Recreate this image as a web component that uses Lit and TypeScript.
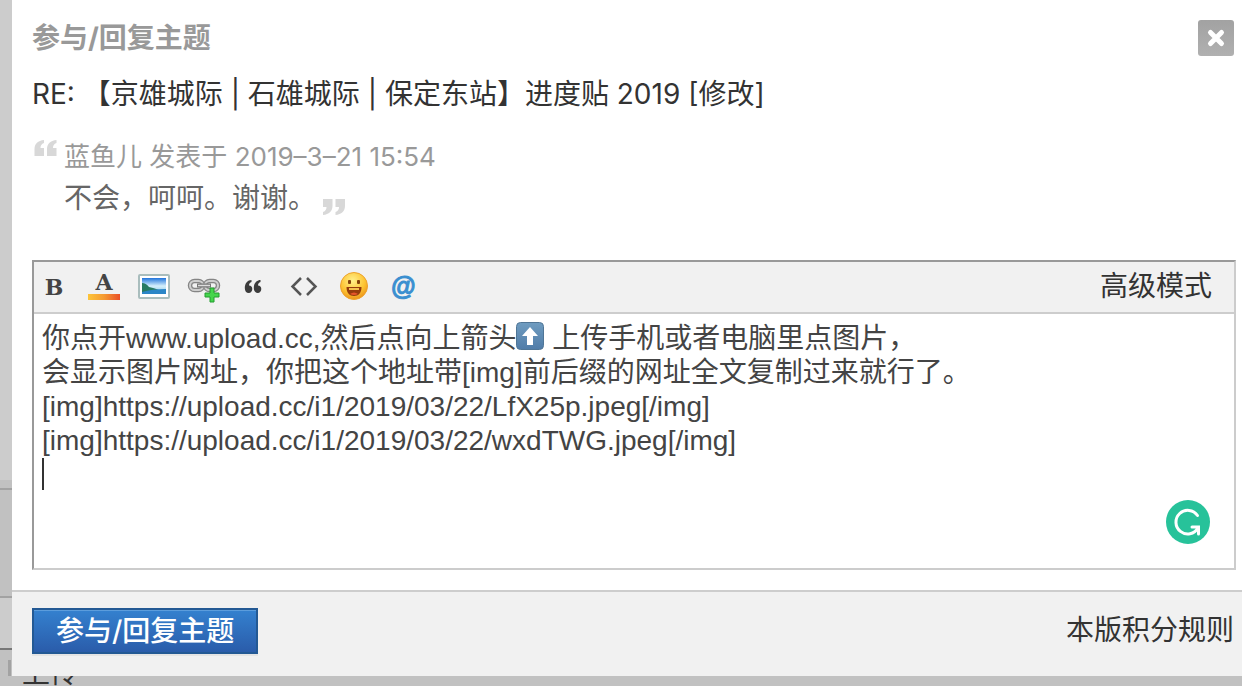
import { LitElement, html, css, svg } from "lit";
import { customElement, state } from "lit/decorators.js";

const message = [
  "你点开www.upload.cc,然后点向上箭头\u2003 上传手机或者电脑里点图片，",
  "会显示图片网址，你把这个地址带[img]前后缀的网址全文复制过来就行了。",
  "[img]https://upload.cc/i1/2019/03/22/LfX25p.jpeg[/img]",
  "[img]https://upload.cc/i1/2019/03/22/wxdTWG.jpeg[/img]",
  "",
].join("\n");

const icons = {
  bold: svg`<text x="20" y="24" text-anchor="middle" class="serif" font-size="22">B</text>`,
  color: svg`<defs><linearGradient id="bar"><stop offset="0" stop-color="#fdc53a"/><stop offset=".5" stop-color="#f59a33"/><stop offset="1" stop-color="#ea4f27"/></linearGradient></defs>
    <text x="20" y="19" text-anchor="middle" class="serif" font-size="22">A</text><rect x="4" y="23" width="32" height="6" fill="url(#bar)"/>`,
  image: svg`<defs><linearGradient id="sky" x2="0" y2="1"><stop offset="0" stop-color="#1f74dc"/><stop offset=".5" stop-color="#d5f0fb"/><stop offset="1" stop-color="#7fc0e6"/></linearGradient></defs>
    <rect x="5" y="4" width="30" height="23" rx="1" fill="#fff" stroke="#a9bdbd" stroke-width="2"/><rect x="8" y="7" width="24" height="16" fill="url(#sky)"/>
    <path d="M8 12q4 0 7 4q5 1 10 3l-6 1l-11 2z" fill="#287b61"/><path d="M8 21q10-3 24-3v5H8z" fill="#2b86c7"/>`,
  link: svg`<g fill="none" stroke="#858585" stroke-width="4.500"><rect x="6" y="10" width="13" height="9" rx="4.500"/><rect x="21" y="10" width="13" height="9" rx="4.500"/></g>
    <g fill="none" stroke="#cfcfcf" stroke-width="2"><rect x="6" y="10" width="13" height="9" rx="4.500"/><rect x="21" y="10" width="13" height="9" rx="4.500"/></g>
    <path d="M13 14.500h14" stroke="#777" stroke-width="4"/><path d="M14 14.500h12" stroke="#ddd" stroke-width="1.500"/>
    <path d="M26 17h4v5h5v4h-5v5h-4v-5h-5v-4h5z" fill="#45d54c" stroke="#259c31"/>`,
  quote: svg`<path d="M17.500 9v2c-1.500.5-2.500 1.500-2.500 3.500c2 0 3.300 1.200 3.300 3.500s-1.500 4-3.500 4c-2.500 0-4-2-4-5c0-5 3-8 6.700-8zM26.500 9v2c-1.500.5-2.500 1.500-2.500 3.500c2 0 3.300 1.200 3.300 3.500s-1.500 4-3.500 4c-2.500 0-4-2-4-5c0-5 3-8 6.700-8z" fill="#3c3c3c"/>`,
  code: svg`<path d="M17 7L8.500 15.500l8.500 8.500M23 7l8.500 8.500L23 24" fill="none" stroke="#555" stroke-width="2.500"/>`,
  smile: svg`<defs><radialGradient id="face" cx=".45" cy=".3" r=".75"><stop offset="0" stop-color="#fff08a"/><stop offset=".6" stop-color="#fdc433"/><stop offset="1" stop-color="#e98b17"/></radialGradient></defs>
    <circle cx="20" cy="15" r="13.500" fill="url(#face)" stroke="#eda22c"/><rect x="14" y="9" width="3" height="4" rx="1" fill="#85420b"/><rect x="23" y="9" width="3" height="4" rx="1" fill="#85420b"/>
    <path d="M12.500 16h15c0 6-3 9-7.500 9s-7.500-3-7.500-9z" fill="#963b0c"/><path d="M15 17h10v2H15z" fill="#f5c14f"/><path d="M16 23q4-3 8 0q-4 2-8 0z" fill="#e8552b"/>`,
  at: svg`<text x="19" y="24" text-anchor="middle" font-size="25" class="at">@</text>`,
};

const tools = [
  { name: "粗体", icon: icons.bold },
  { name: "文字颜色", icon: icons.color },
  { name: "图片", icon: icons.image },
  { name: "添加链接", icon: icons.link },
  { name: "引用", icon: icons.quote },
  { name: "代码", icon: icons.code },
  { name: "表情", icon: icons.smile },
  { name: "@朋友", icon: icons.at },
];

@customElement("editor-toolbar")
export class EditorToolbar extends LitElement {
  static styles = css`
    :host {
      display: flex;
      align-items: center;
      height: 52px;
      box-sizing: border-box;
      padding-right: 22px;
      background: #f1f1f1;
      border-bottom: 2px solid #cdcdcd;
    }
    .tools { display: flex; gap: 10px; flex: 1; }
    button { width: 40px; height: 32px; padding: 0; border: 0; background: none; }
    svg { display: block; width: 40px; height: 32px; }
    a { color: #333; text-decoration: none; font-size: 28px; line-height: 40px; }
    .serif { font-family: "DejaVu Serif", serif; font-weight: 700; fill: #444; }
    .at { font-family: "Liberation Sans", sans-serif; font-weight: 700; font-style: italic; fill: #3a8fd0; stroke: #3a8fd0; stroke-width: 1px; }
  `;
  render() {
    return html`
      <div class="tools" role="toolbar">
        ${tools.map((t) => html`<button type="button" aria-label=${t.name}><svg viewBox="0 0 40 32" aria-hidden="true">${t.icon}</svg></button>`)}
      </div>
      <a href="#advanced">高级模式</a>
    `;
  }
}

@customElement("app-root")
export class AppRoot extends LitElement {
  @state() private text = message;

  static styles = css`
    :host {
      display: block;
      font-family: "Liberation Sans", "Noto Sans CJK SC", sans-serif;
      color: #333;
    }
    * { box-sizing: border-box; }
    .page {
      display: grid;
      grid-template-columns: 12px 1fr;
      grid-template-rows: auto 1fr;
      height: 100vh;
      overflow: hidden;
      background: #c1c1c1;
    }
    .behind { display: flex; flex-direction: column; }
    .behind .top { height: 480px; background: #ccc; }
    .behind .head { height: 10px; border-bottom: 2px solid #a2a2a2; }
    .behind .gap { height: 108px; border-bottom: 2px solid #a2a2a2; }
    .behind .row { height: 52px; background: #ccc; border-bottom: 2px solid #777; }
    .behind .edge { flex: 1; margin: 10px 0 0 8px; border-left: 3px solid #a2a2a2; }
    .below { grid-column: 1 / 3; display: flex; align-items: flex-end; height: 10px; overflow: hidden; }
    .below .user { flex: none; margin-bottom: -8px; padding-left: 22px; font-size: 28px; line-height: 40px; }
    .dialog { background: #fff; }
    .content { padding: 18px 6px 20px 20px; }
    header { display: flex; justify-content: space-between; align-items: center; height: 40px; padding-right: 2px; }
    h1 { margin: 0; font-family: "Inter", "Noto Sans CJK SC", sans-serif; font-size: 28px; line-height: 40px; color: #999; font-weight: 700; }
    .close { width: 36px; height: 36px; padding: 0; border: 0; border-radius: 3px; background: linear-gradient(#a2a2a2, #b0b0b0); }
    .close svg { display: block; }
    .subject { margin: 16px 0 0; font-family: "Inter", "Noto Sans CJK SC", sans-serif; font-size: 28px; line-height: 40px; }
    .subject a { color: #333; text-decoration: none; }
    blockquote { display: grid; grid-template-columns: 32px 1fr; margin: 22px 0 0; }
    .mark { display: block; width: 28px; height: 24px; fill: #d8d8d8; }
    .by { margin: 0; font-family: "Inter", "Noto Sans CJK SC", sans-serif; font-size: 26px; line-height: 42px; color: #999; }
    .said { display: flex; gap: 4px; align-items: flex-end; margin: 0; font-size: 28px; line-height: 42px; color: #666; }
    .editor {
      position: relative;
      margin-top: 40px;
      border: 2px solid;
      border-color: #999 #ccc #ccc #999;
    }
    textarea {
      display: block;
      width: 100%;
      height: 254px;
      padding: 8px;
      border: 0;
      outline: 0;
      resize: none;
      background: #fff;
      color: #444;
      font: inherit;
      font-size: 28px;
      line-height: 34px;
    }
    .arrow { position: absolute; left: 482px; top: 60px; pointer-events: none; }
    .caret { position: absolute; left: 8px; top: 196px; width: 2px; height: 32px; background: #333; }
    .grammar { position: absolute; right: 24px; bottom: 24px; width: 44px; height: 44px; padding: 0; border: 0; background: none; }
    .grammar svg { display: block; }
    footer {
      display: flex;
      justify-content: space-between;
      align-items: center;
      height: 86px;
      padding: 0 8px 6px 20px;
      background: #f1f1f1;
      border-top: 2px solid #cdcdcd;
    }
    .submit {
      height: 46px;
      padding: 0 22px;
      border: 2px solid #235994;
      background: linear-gradient(#3481cf, #2a5caa);
      box-shadow: 0 2px 0 #e4e4e4, inset 0 1px 0 #5c9ddc;
      color: #fff;
      font-family: "Inter", "Noto Sans CJK SC", sans-serif;
      font-size: 28px;
      font-weight: 500;
      line-height: 40px;
    }
    footer a { color: #333; text-decoration: none; font-size: 28px; line-height: 40px; }
  `;

  render() {
    return html`
      <div class="page">
        <div class="behind">
          <div class="top"></div><div class="head"></div><div class="gap"></div><div class="row"></div><div class="edge"></div>
        </div>
        <form class="dialog" role="dialog" aria-labelledby="title" @submit=${(e: Event) => e.preventDefault()}>
          <div class="content">
            <header>
              <h1 id="title">参与/回复主题</h1>
              <button class="close" type="button" aria-label="关闭">
                <svg viewBox="0 0 36 36" width="36" height="36"><path d="M12.500 12.500l11 11M23.500 12.500l-11 11" stroke="#fff" stroke-width="5" stroke-linecap="round"/></svg>
              </button>
            </header>
            <p class="subject">RE: 【京雄城际 | 石雄城际 | 保定东站】进度贴 2019 [<a href="#edit">修改</a>]</p>
            <blockquote>
              <svg class="mark" viewBox="0 0 28 24"><path d="M12 4v3c-2.500 1-3.500 2.500-3.500 5H12v8H2.500v-7C2.500 8 6 4.500 12 4zM24.500 4v3c-2.500 1-3.500 2.500-3.500 5h3.500v8H15v-7c0-5 3.500-8.500 9.500-9z"/></svg>
              <div>
                <p class="by">蓝鱼儿 发表于 2019–3–21 15:54</p>
                <p class="said">不会，呵呵。谢谢。<svg class="mark" viewBox="0 0 28 24"><path d="M3 19v-3c2.500-1 3.500-2.500 3.500-5H3V3h9.500v7c0 5-3.500 8.500-9.500 9zM15.500 19v-3c2.500-1 3.500-2.500 3.500-5h-3.500V3H25v7c0 5-3.500 8.500-9.500 9z"/></svg></p>
              </div>
            </blockquote>
            <div class="editor">
              <editor-toolbar></editor-toolbar>
              <textarea aria-label="回复内容" spellcheck="false" .value=${this.text}
                @input=${(e: Event) => (this.text = (e.target as HTMLTextAreaElement).value)}></textarea>
              <svg class="arrow" viewBox="0 0 28 28" width="28" height="28">
                <defs><linearGradient id="key" x2="0" y2="1"><stop offset="0" stop-color="#6f9cc0"/><stop offset="1" stop-color="#507ca8"/></linearGradient></defs>
                <rect x=".5" y=".5" width="27" height="27" rx="4" fill="url(#key)" stroke="#507696"/><path d="M14 5l8 9h-5v9h-6v-9H6z" fill="#fff"/>
              </svg>
              <span class="caret"></span>
              <button class="grammar" type="button" aria-label="语法检查">
                <svg viewBox="0 0 44 44" width="44" height="44"><circle cx="22" cy="22" r="22" fill="#27c29a"/><path d="M31.500 15.500A11.800 11.800 0 1 0 32 28M26 27h6.500v7" fill="none" stroke="#fff" stroke-width="3" stroke-linecap="round"/></svg>
              </button>
            </div>
          </div>
          <footer>
            <button class="submit" type="submit">参与/回复主题</button>
            <a href="#rules">本版积分规则</a>
          </footer>
        </form>
        <div class="below"><span class="user">上传</span></div>
      </div>
    `;
  }
}
